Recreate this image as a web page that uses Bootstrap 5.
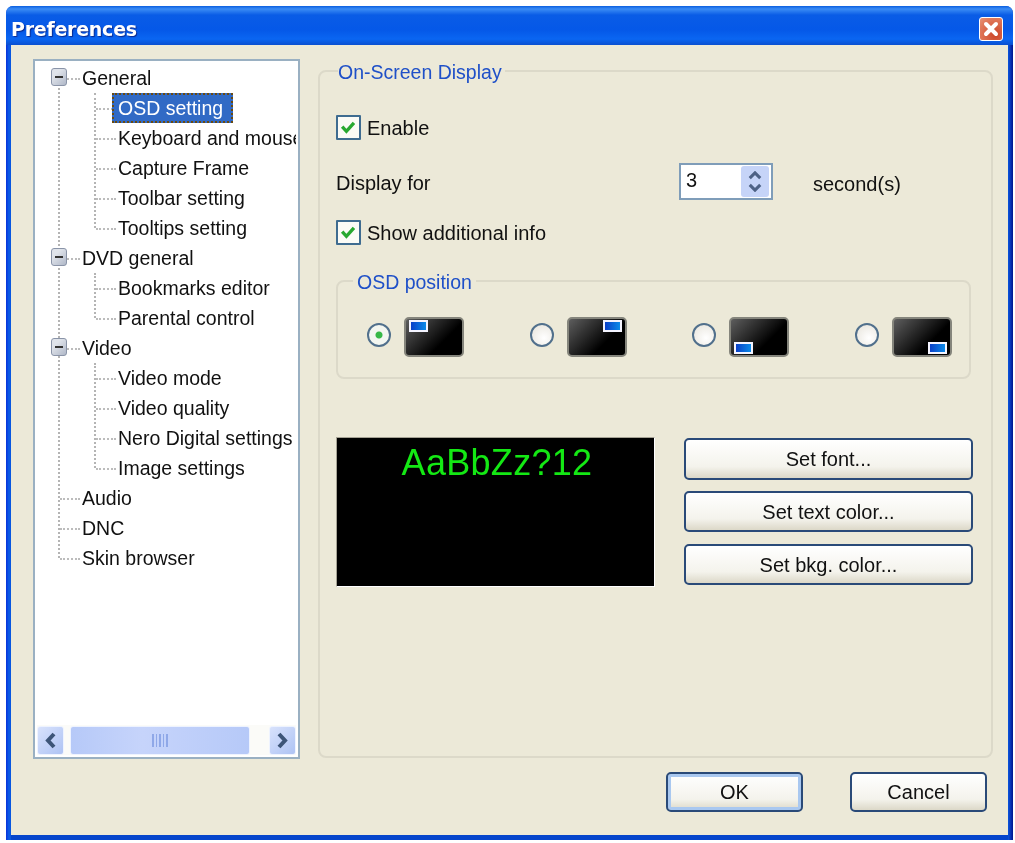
<!DOCTYPE html>
<html lang="en">
<head>
<meta charset="utf-8">
<title>Preferences</title>
<link rel="stylesheet" href="https://cdn.jsdelivr.net/npm/bootstrap@5.3.0/dist/css/bootstrap.min.css">
<style>
html,body{height:100%;overflow:hidden}
body{background:#fff;font-family:"Liberation Sans",Arial,sans-serif;font-size:20px;line-height:24px;color:#111;padding:6px 0 0 6px}
.xp-win{width:1007px;height:834px;background:linear-gradient(90deg,#0831d9 0,#0a5ce8 3px,#0855dd 5px,#0855dd 1002px,#0a3cc0 1004px,#00138c 1007px);border-radius:7px 7px 0 0;overflow:hidden}
.xp-title{height:39px;background:linear-gradient(180deg,#0a5fe0 0,#3b8cf5 3px,#0a5ce6 9px,#0558e8 24px,#0a66f2 33px,#0a4fd0 39px);padding:6px 10px 0 5px;color:#fff}
.xp-title-text{font-family:"DejaVu Sans",sans-serif;font-weight:700;font-size:19px;letter-spacing:-.25px;line-height:24px;text-shadow:1px 1px 1px #0a2a90}
.xp-close{width:24px;height:24px;padding:0;border:1px solid #fff;border-radius:3px;background:radial-gradient(circle at 70% 75%,#cc4628,#e0785a 70%,#e89478);line-height:0}
.xp-client{margin:0 5px 5px 5px;height:790px;background:#ece9d8;padding:14px 0 0 22px;box-shadow:0 5px 0 #0545cc}
.xp-tree{width:267px;height:700px;background:#fff;border:2px solid #9ab0c2;padding:2px}
.xp-tree-clip{height:663px;overflow:hidden;position:relative}
.xp-root,.xp-sub{list-style:none;margin:0;padding:0;position:relative}
.xp-root::before{content:"";position:absolute;left:21px;top:20px;bottom:15px;border-left:2px dotted #b4b4b4}
.xp-sub::before{content:"";position:absolute;left:57px;top:0;bottom:15px;border-left:2px dotted #b4b4b4}
.xp-row{height:30px;padding-left:45px;line-height:30px;white-space:nowrap;position:relative;font-size:19.5px}
.xp-row::before{content:"";position:absolute;left:23px;width:20px;top:15px;border-top:2px dotted #bcbcbc}
.xp-sub .xp-row{padding-left:81px}
.xp-sub .xp-row::before{left:59px;width:20px}
.xp-exp{position:absolute;left:14px;top:5px;width:16px;height:18px;border:1px solid #8a94a8;border-radius:3px;background:linear-gradient(135deg,#dfe3ea 30%,#b0b8c8);z-index:1}
.xp-exp::after{content:"";position:absolute;left:3px;right:3px;top:7px;height:2px;background:#333}
.xp-selected{display:inline-block;height:30px;line-height:26px;margin-left:-6px;padding:0 8px 0 4px;color:#fff;background:#316ac5;border:2px dotted #6a4a10;position:relative;z-index:1}
.xp-hscroll{height:30px;background:#fbfbf8;padding:1px 0 0 0;gap:6px}
.xp-sb-btn{width:27px;height:29px;padding:0;border:1px solid #eef3ff;border-radius:3px;background:linear-gradient(135deg,#d8e2fc,#aec3f4);line-height:0}
.xp-sb-thumb{width:180px;height:29px;border:1px solid #eef3ff;border-radius:3px;background:linear-gradient(90deg,#b6c9f8,#c6d4fb 40%,#b6c9f8);gap:2px}
.xp-sb-thumb i{width:1.500px;height:13px;background:#8fa8e8;display:block}
.xp-sb-track{flex:1}
.xp-group{border:2px solid #dcd9c9;border-radius:8px}
.xp-main{width:675px;height:688px;margin:11px 0 0 18px;padding:0 0 0 16px}
.xp-legend{display:block;width:fit-content;height:24px;line-height:24px;margin:-12px 0 0 2px;padding:0 3px 0 0;background:#ece9d8;color:#1f50c8;font-size:19.5px}
.xp-check.form-check-input{width:25px;height:25px;margin:0;border:2px solid #3f6c90;border-radius:1px;background-color:#fbfbf6;flex:none;float:none}
.xp-check.form-check-input:checked[type=checkbox]{background-color:#fbfbf6;border-color:#3f6c90;background-image:url("data:image/svg+xml,%3Csvg xmlns='http://www.w3.org/2000/svg' viewBox='0 0 25 25'%3E%3Cpath d='M5 11.500l5 5.500 9-10' fill='none' stroke='%2328a830' stroke-width='4'/%3E%3C/svg%3E");background-size:100% 100%}
.xp-check-row{gap:6px;height:25px}
.xp-r1{margin-top:31px}
.xp-r2{height:37px;margin-top:23px}
.xp-r3{margin-top:20px}
.xp-dlabel{width:343px}
.xp-spin{width:94px;height:37px;background:#fff;border:2px solid #7f9db9;padding:1px 2px 1px 0}
.xp-spin input{border:0;background:transparent;width:60px;padding:0 0 0 5px;font:inherit;color:#111;line-height:24px;height:28px;outline:0}
.xp-spin-btn{width:29px;background:#c6d4f8;border-radius:3px;gap:3px}
.xp-seconds{margin-left:40px;padding-top:9px}
.xp-osd{width:635px;height:99px;margin:35px 0 0 0;padding:0 0 0 29px}
.xp-osd .xp-legend{margin-left:-14px;padding:0 4px}
.xp-pos{margin-top:23px;padding-right:17px}
.xp-pos-item{gap:13px}
.xp-radio.form-check-input{width:24px;height:24px;margin:0 0 4px;border:2px solid #51708c;border-radius:50%;background-color:#f3f1ea;background-image:radial-gradient(circle at 60% 65%,#fff,#e6e3da);float:none;flex:none}
.xp-radio.form-check-input:checked[type=radio]{background-color:#f3f1ea;border-color:#51708c;background-image:radial-gradient(circle,#38b848 0 3px,#f3f6f0 4px)}
.xp-thumb{width:60px;height:40px;border:2px solid #85857c;border-radius:5px;background:linear-gradient(135deg,#5e5e5e,#000 65%);position:relative}
.xp-mini{position:absolute;width:19px;height:12px;border:2px solid #f4f4ff;background:linear-gradient(90deg,#0a3fc8,#0a8ae8)}
.xp-tl{left:3px;top:1px}.xp-tr{right:3px;top:1px}.xp-bl{left:3px;bottom:1px}.xp-br{right:3px;bottom:1px}
.xp-lower{margin-top:58px}
.xp-preview{width:319px;height:150px;background:#000;border:1px solid;border-color:#a5a294 #fff #fff #a5a294;color:#14e814;font-size:36px;line-height:50px;text-align:center;padding-left:3px;letter-spacing:.3px;flex:none}
.xp-btns{margin-left:29px;margin-top:1px;width:289px}
.xp-btn.btn{display:block;width:100%;font:inherit;color:#111;padding:0;border:2px solid #2a4a78;border-radius:5px;background:linear-gradient(180deg,#fff,#f4f3ec 70%,#dcd8c8);text-align:center}
.xp-btn-a.btn{height:42px;margin-bottom:11px}
.xp-btn-b.btn{height:41px;margin-bottom:12px}
.xp-footer{gap:47px;margin:13px 0 0 0;padding-right:21px}
.xp-foot.btn{width:137px;height:40px}
.xp-default.btn{box-shadow:inset 0 0 0 3px #a9c8f0}
.xp-soft{filter:blur(.45px)}
</style>
</head>
<body>
<div class="xp-win xp-soft">
  <div class="xp-title d-flex align-items-center justify-content-between">
    <span class="xp-title-text">Preferences</span>
    <button class="xp-close btn" type="button" aria-label="Close"><svg width="22" height="22" viewBox="0 0 22 22"><path d="M6 6l10 10M16 6L6 16" stroke="#fff" stroke-width="4" stroke-linecap="round"/></svg></button>
  </div>
  <div class="xp-client">
    <div class="d-flex">
      <div class="xp-tree d-flex flex-column">
        <div class="xp-tree-clip">
          <ul class="xp-root">
            <li><div class="xp-row"><span class="xp-exp"></span>General</div>
              <ul class="xp-sub">
                <li class="xp-row"><span class="xp-selected">OSD setting</span></li>
                <li class="xp-row">Keyboard and mouse</li>
                <li class="xp-row">Capture Frame</li>
                <li class="xp-row">Toolbar setting</li>
                <li class="xp-row">Tooltips setting</li>
              </ul></li>
            <li><div class="xp-row"><span class="xp-exp"></span>DVD general</div>
              <ul class="xp-sub">
                <li class="xp-row">Bookmarks editor</li>
                <li class="xp-row">Parental control</li>
              </ul></li>
            <li><div class="xp-row"><span class="xp-exp"></span>Video</div>
              <ul class="xp-sub">
                <li class="xp-row">Video mode</li>
                <li class="xp-row">Video quality</li>
                <li class="xp-row">Nero Digital settings</li>
                <li class="xp-row">Image settings</li>
              </ul></li>
            <li class="xp-row">Audio</li>
            <li class="xp-row">DNC</li>
            <li class="xp-row">Skin browser</li>
          </ul>
        </div>
        <div class="xp-hscroll d-flex">
          <button class="xp-sb-btn btn" type="button" aria-label="Left"><svg width="25" height="27" viewBox="0 0 25 27"><path d="M16 7l-6 6.500 6 6.500" fill="none" stroke="#3d5578" stroke-width="4"/></svg></button>
          <div class="xp-sb-thumb d-flex align-items-center justify-content-center"><i></i><i></i><i></i><i></i><i></i></div>
          <div class="xp-sb-track"></div>
          <button class="xp-sb-btn btn" type="button" aria-label="Right"><svg width="25" height="27" viewBox="0 0 25 27"><path d="M9 7l6 6.500-6 6.500" fill="none" stroke="#3d5578" stroke-width="4"/></svg></button>
        </div>
      </div>
      <section class="xp-group xp-main">
        <div class="xp-legend">On-Screen Display</div>
        <label class="xp-check-row xp-r1 d-flex align-items-center"><input class="xp-check form-check-input" type="checkbox" checked><span>Enable</span></label>
        <div class="xp-r2 d-flex">
          <div class="xp-dlabel pt-2">Display for</div>
          <div class="xp-spin d-flex">
            <input type="text" value="3" aria-label="Seconds">
            <div class="xp-spin-btn d-flex flex-column align-items-center justify-content-center"><svg width="14" height="9" viewBox="0 0 16 10"><path d="M2 8l6-6 6 6" fill="none" stroke="#4d6185" stroke-width="3.500"/></svg><svg width="14" height="9" viewBox="0 0 16 10"><path d="M2 2l6 6 6-6" fill="none" stroke="#4d6185" stroke-width="3.500"/></svg></div>
          </div>
          <div class="xp-seconds">second(s)</div>
        </div>
        <label class="xp-check-row xp-r3 d-flex align-items-center"><input class="xp-check form-check-input" type="checkbox" checked><span>Show additional info</span></label>
        <section class="xp-group xp-osd">
          <div class="xp-legend">OSD position</div>
          <div class="xp-pos d-flex justify-content-between">
            <label class="xp-pos-item d-flex align-items-center"><input class="xp-radio form-check-input" type="radio" name="p" checked><span class="xp-thumb"><span class="xp-mini xp-tl"></span></span></label>
            <label class="xp-pos-item d-flex align-items-center"><input class="xp-radio form-check-input" type="radio" name="p"><span class="xp-thumb"><span class="xp-mini xp-tr"></span></span></label>
            <label class="xp-pos-item d-flex align-items-center"><input class="xp-radio form-check-input" type="radio" name="p"><span class="xp-thumb"><span class="xp-mini xp-bl"></span></span></label>
            <label class="xp-pos-item d-flex align-items-center"><input class="xp-radio form-check-input" type="radio" name="p"><span class="xp-thumb"><span class="xp-mini xp-br"></span></span></label>
          </div>
        </section>
        <div class="xp-lower d-flex">
          <div class="xp-preview">AaBbZz?12</div>
          <div class="xp-btns">
            <button class="xp-btn xp-btn-a btn" type="button">Set font...</button>
            <button class="xp-btn xp-btn-b btn" type="button">Set text color...</button>
            <button class="xp-btn xp-btn-b btn" type="button">Set bkg. color...</button>
          </div>
        </div>
      </section>
    </div>
    <div class="xp-footer d-flex justify-content-end">
      <button class="xp-btn xp-foot xp-default btn" type="button">OK</button>
      <button class="xp-btn xp-foot btn" type="button">Cancel</button>
    </div>
  </div>
</div>
<script src="https://cdn.jsdelivr.net/npm/bootstrap@5.3.0/dist/js/bootstrap.bundle.min.js"></script>
</body>
</html>
